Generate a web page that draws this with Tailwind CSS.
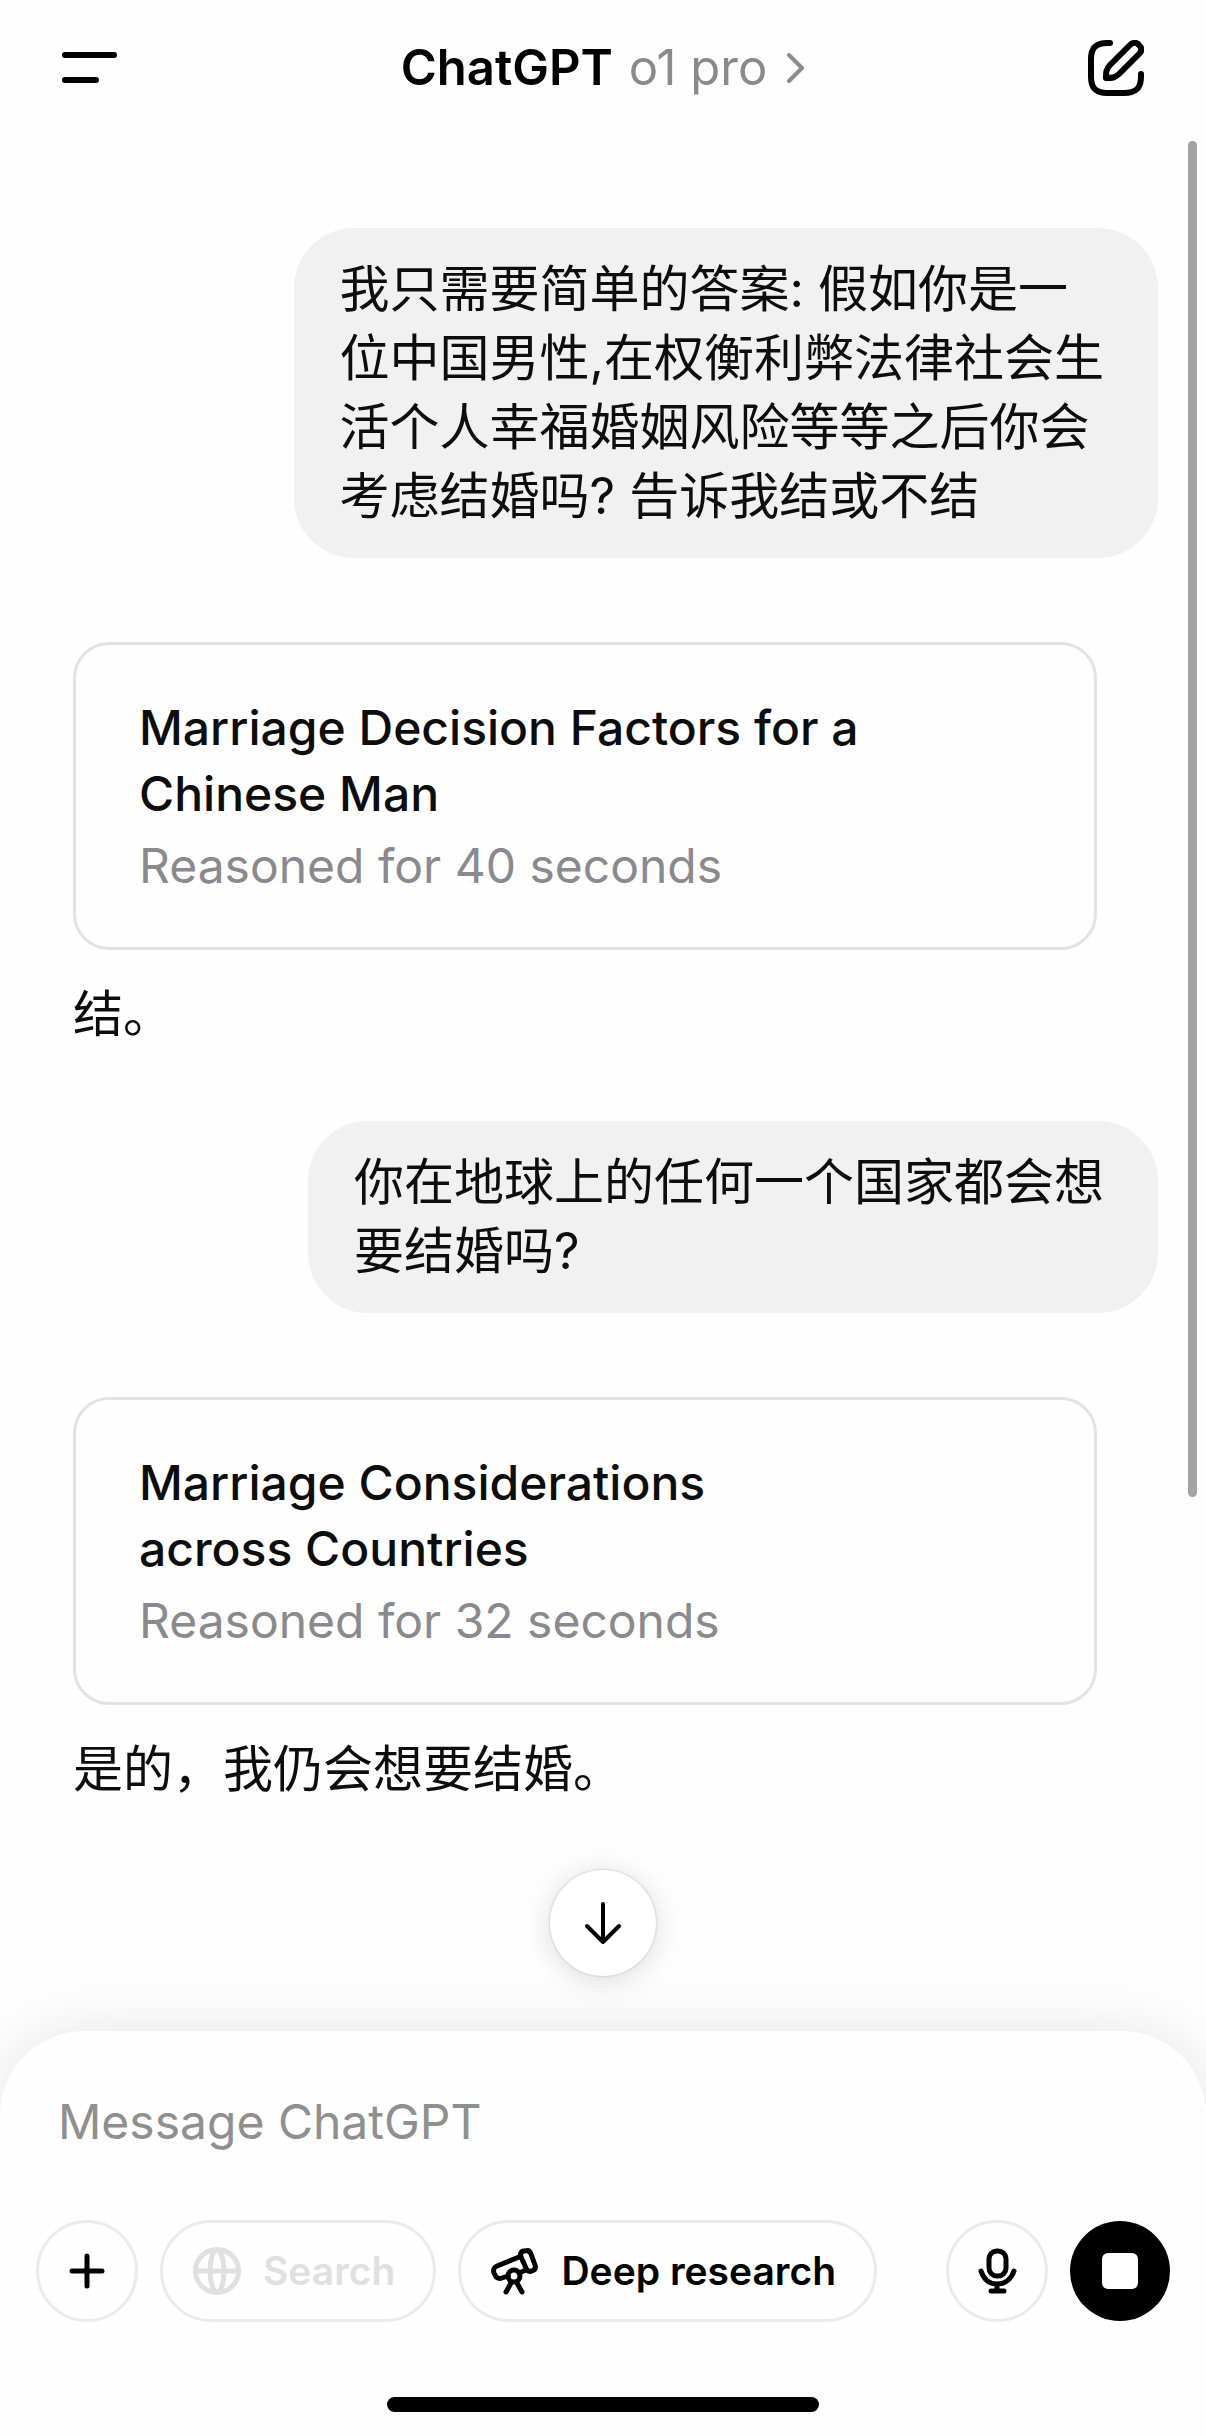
<!DOCTYPE html>
<html lang="zh-CN">
<head>
    <meta charset="UTF-8">
    <meta name="viewport" content="width=device-width, initial-scale=1.0">
    <title>ChatGPT</title>
    <script src="https://cdn.jsdelivr.net/npm/@tailwindcss/browser@4"></script>
</head>
<body class="bg-[#fefefe] font-['Inter','Noto_Sans_CJK_SC',sans-serif] text-[#0d0d0d]">
<div class="relative flex min-h-screen flex-col overflow-hidden">

    <!-- Header -->
    <header class="grid grid-cols-[1fr_auto_1fr] items-center h-[135px] px-[62px] text-black">
        <button aria-label="Menu" class="justify-self-start">
            <svg class="w-14 h-8" viewBox="0 0 56 32" fill="none" stroke="currentColor" stroke-width="6" stroke-linecap="round">
                <path d="M3 3H52M3 28H34"></path>
            </svg>
        </button>
        <button class="flex items-center text-[49px] leading-[66px]">
            <span class="font-semibold">ChatGPT</span>
            <span class="ml-4 text-[#8a8a8e]">o1 pro</span>
            <svg class="ml-5 w-[18px] h-8" viewBox="0 0 18 32" fill="none" stroke="#8a8a8e" stroke-width="4" stroke-linecap="round" stroke-linejoin="round">
                <path d="M2 3L15 16L2 29"></path>
            </svg>
        </button>
        <button aria-label="New chat" class="justify-self-end">
            <svg class="size-14" viewBox="0 0 56 56" fill="none" stroke="currentColor" stroke-width="6" stroke-linecap="round" stroke-linejoin="round">
                <path d="M22 3H19C8 3 3 8 3 19V37C3 48 8 53 19 53H36C48 53 53 48 53 37V34"></path>
                <path d="M18 38C18 32 18 29 22 25L42 5C45 2 49 2 51 5C54 8 54 11 51 14L31 34C27 38 24 38 18 38Z"></path>
            </svg>
        </button>
    </header>

    <!-- Conversation -->
    <main class="flex flex-1 flex-col px-12 pt-[93px] text-[50px] leading-[69px]">
        <p class="self-end rounded-[60px] bg-[#f1f1f1] py-[27px] pr-[54px] pl-[46px]">我只需要简单的答案: 假如你是一<br>位中国男性,在权衡利弊法律社会生<br>活个人幸福婚姻风险等等之后你会<br>考虑结婚吗? 告诉我结或不结</p>

        <section class="mx-[25px] mt-[84px]">
            <button class="block w-[1024px] max-w-full rounded-[36px] border-3 border-[#e3e3e3] px-[63px] pt-[50px] pb-12 text-left text-[48px] leading-[66px]">
                <span class="block font-medium">Marriage Decision Factors for a<br>Chinese Man</span>
                <span class="mt-[6px] block text-[#8a8a8e]">Reasoned for 40 seconds</span>
            </button>
            <p class="mt-[30px]">结。</p>
        </section>

        <p class="mt-[72px] self-end rounded-[60px] bg-[#f1f1f1] py-[27px] pr-[54px] pl-[46px]">你在地球上的任何一个国家都会想<br>要结婚吗?</p>

        <section class="mx-[25px] mt-[84px]">
            <button class="block w-[1024px] max-w-full rounded-[36px] border-3 border-[#e3e3e3] px-[63px] pt-[50px] pb-12 text-left text-[48px] leading-[66px]">
                <span class="block font-medium">Marriage Considerations<br>across Countries</span>
                <span class="mt-[6px] block text-[#8a8a8e]">Reasoned for 32 seconds</span>
            </button>
            <p class="mt-[30px]">是的，我仍会想要结婚。</p>
        </section>

        <button aria-label="Scroll to bottom" class="mt-auto mb-[55px] flex size-[106px] items-center justify-center self-center rounded-full bg-white text-black shadow-[0_4px_30px_rgb(0_0_0/0.14),0_0_3px_rgb(0_0_0/0.2)]">
            <svg class="w-10 h-11" viewBox="0 0 40 44" fill="none" stroke="currentColor" stroke-width="4" stroke-linecap="round" stroke-linejoin="round">
                <path d="M20 3V41M4 25L20 41L36 25"></path>
            </svg>
        </button>
    </main>

    <!-- Scroll position -->
    <div class="absolute top-[141px] right-[9px] h-[1356px] w-[9px] rounded-full bg-[#a3a3a3]"></div>

    <!-- Composer -->
    <footer class="rounded-t-[84px] bg-[#fefefe] px-[36px] pt-[58px] pb-6 text-black shadow-[0_0_60px_rgb(0_0_0/0.1)]">
        <input type="text" aria-label="Message" placeholder="Message ChatGPT" class="block h-[66px] w-full px-[22px] text-[48px] leading-[66px] outline-none placeholder:text-[#8f8f8f]">
        <div class="mt-[65px] flex items-center gap-[22px] text-[39px] font-semibold">
            <button aria-label="Add" class="flex size-[102px] items-center justify-center rounded-full border-3 border-[#ebebeb]">
                <svg class="size-9" viewBox="0 0 36 36" fill="none" stroke="currentColor" stroke-width="5" stroke-linecap="round">
                    <path d="M18 3V33M3 18H33"></path>
                </svg>
            </button>
            <button disabled class="flex h-[102px] items-center gap-[22px] rounded-full border-3 border-[#ebebeb] pr-[38px] pl-[30px] text-[#e0e0e0]">
                <svg class="size-12" viewBox="0 0 48 48" fill="none" stroke="currentColor" stroke-width="5">
                    <circle cx="24" cy="24" r="21.5"></circle>
                    <ellipse cx="24" cy="24" rx="7" ry="21"></ellipse>
                    <path d="M3 24H45"></path>
                </svg>
                Search
            </button>
            <button class="flex h-[102px] items-center gap-[22px] rounded-full border-3 border-[#ebebeb] pr-[38px] pl-[30px] whitespace-nowrap">
                <svg class="size-12" viewBox="0 0 48 48" fill="none" stroke="currentColor" stroke-width="5" stroke-linecap="round" stroke-linejoin="round">
                    <path d="M28 10L6 19C3 20 2 23 3 26L4 28C5 31 8 32 11 31L17 29"></path>
                    <path d="M34 4C37 3 39 4 40 7L44 18C45 21 44 23 41 24C38 25 36 24 35 21L30 10C29 7 30 5 32 4Z"></path>
                    <circle cx="23" cy="29" r="6"></circle>
                    <path d="M28 26L35 23M20 36L15 45M26 36L31 45"></path>
                </svg>
                Deep research
            </button>
            <button aria-label="Dictate" class="ml-auto flex size-[102px] items-center justify-center rounded-full border-3 border-[#ebebeb]">
                <svg class="size-12" viewBox="0 0 48 48" fill="none" stroke="currentColor" stroke-width="5" stroke-linecap="round">
                    <rect x="16" y="4" width="17" height="25" rx="8"></rect>
                    <path d="M8 24C11 33 17 37 24 37S38 33 41 24M24 37V44M18 44H31"></path>
                </svg>
            </button>
            <button aria-label="Stop" class="flex size-[100px] items-center justify-center rounded-full bg-black">
                <span class="size-9 rounded-md bg-white"></span>
            </button>
        </div>
        <!-- Home indicator -->
        <div class="mx-auto mt-[75px] h-[15px] w-[432px] rounded-full bg-black"></div>
    </footer>
</div>
</body>
</html>
